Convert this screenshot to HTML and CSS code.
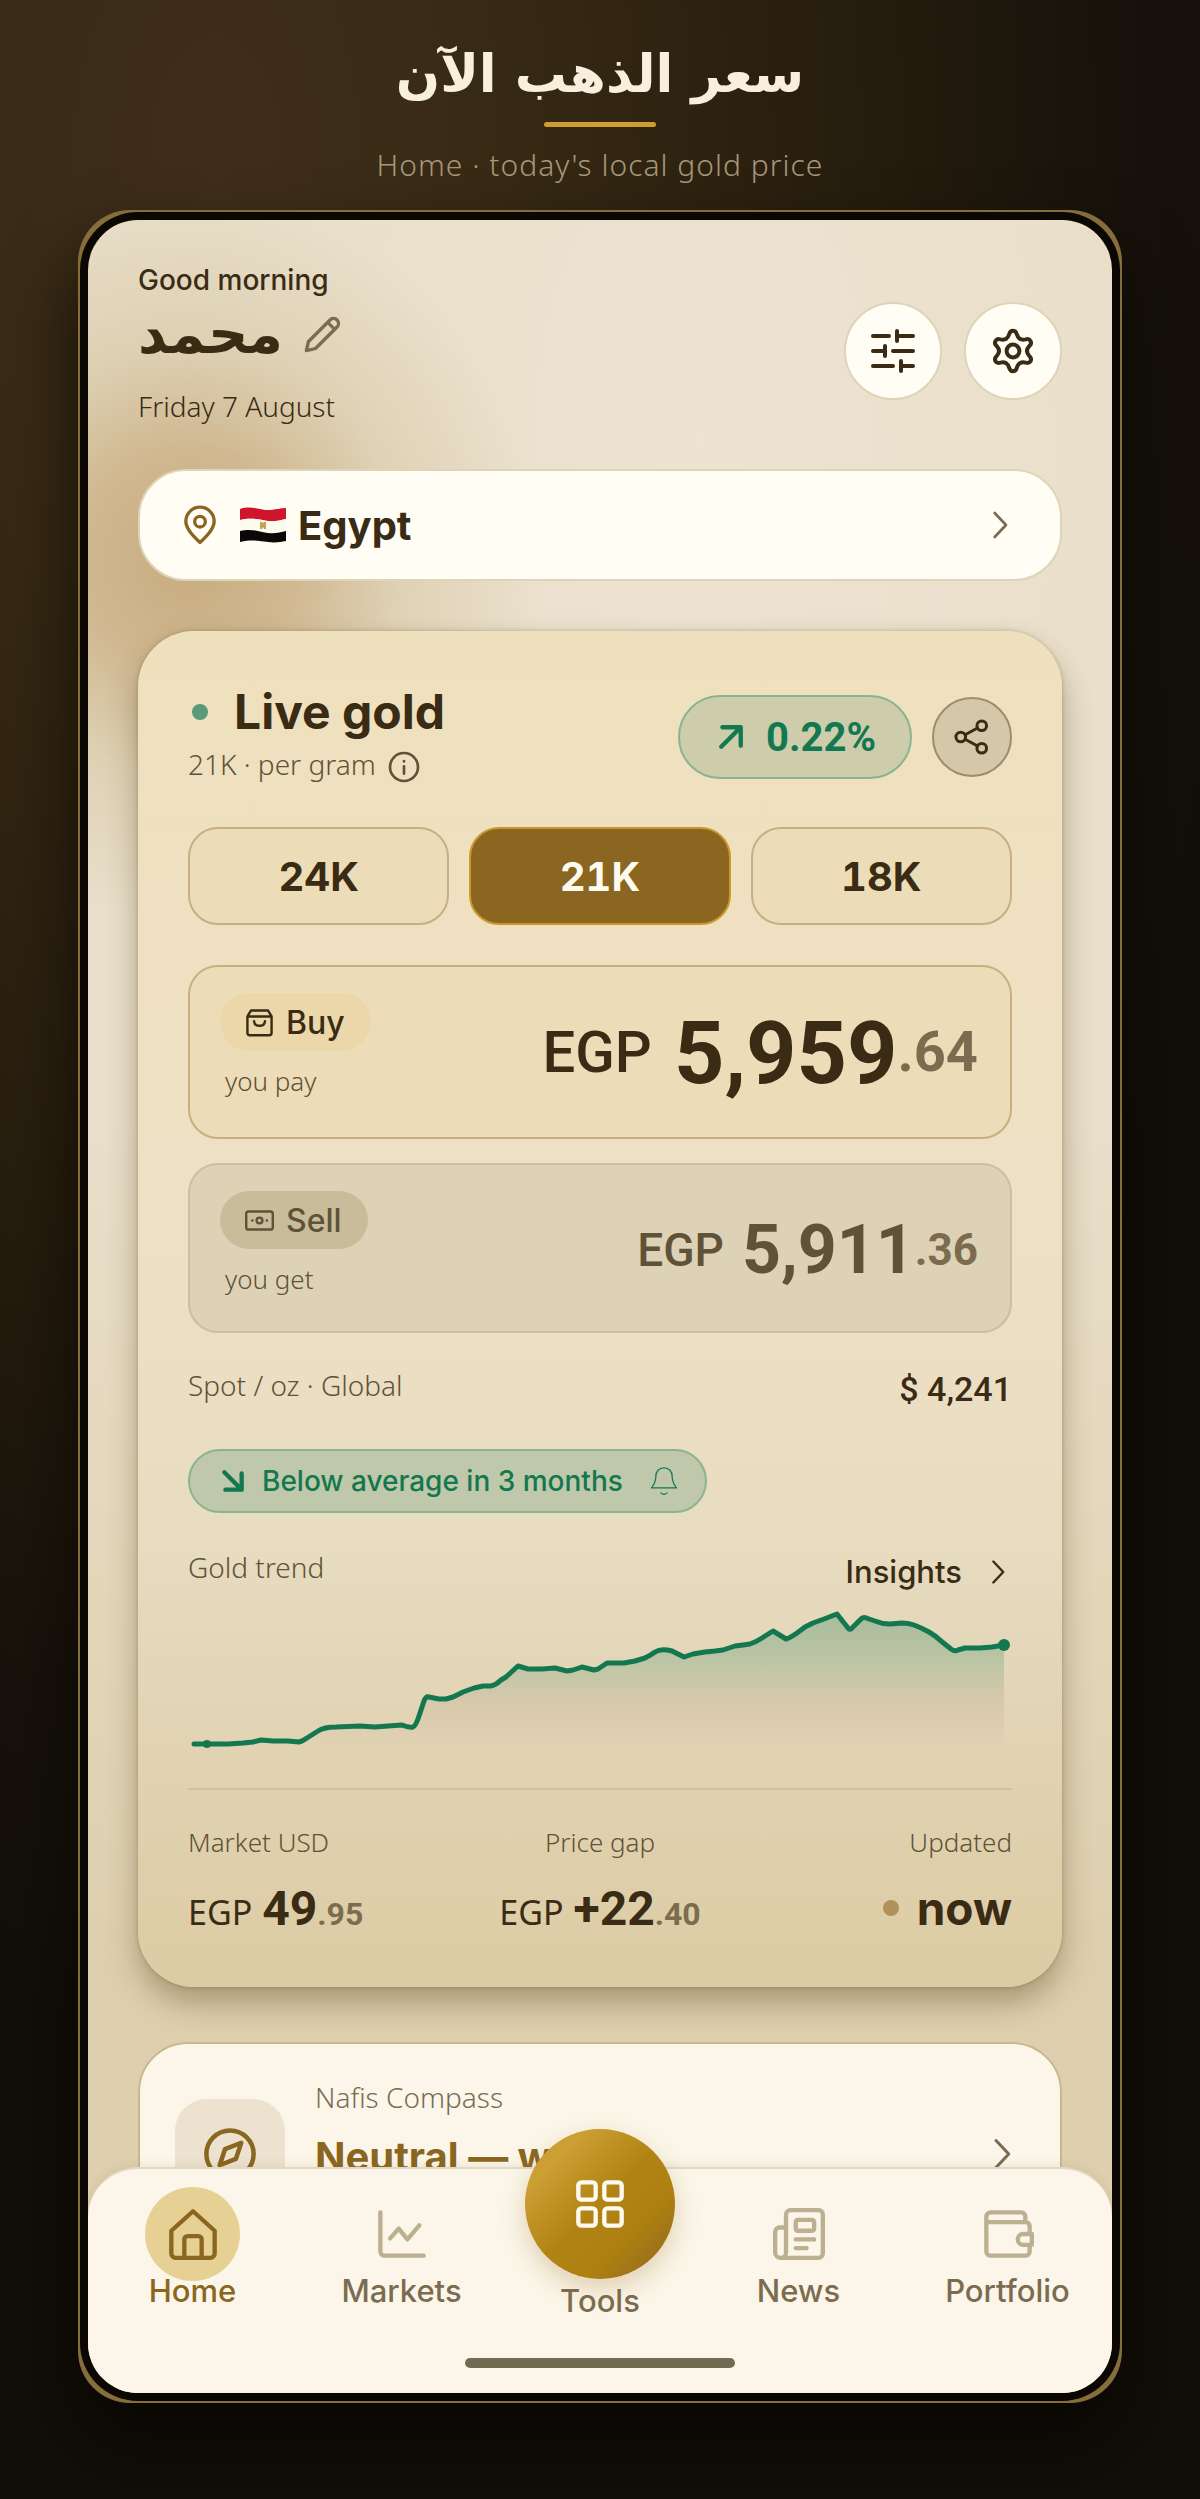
FILE: index.html
```html
<!DOCTYPE html>
<html lang="en">
<head>
  <meta charset="UTF-8">
  <meta name="viewport" content="width=device-width, initial-scale=1.0">
  <title>Live gold price</title>
  <link rel="stylesheet" href="styles.css">
</head>
<body>
  <header class="hero">
    <h1 lang="ar" dir="rtl">سعر الذهب الآن</h1>
    <span class="hero-line"></span>
    <p>Home · today's local gold price</p>
  </header>

  <div class="phone">
    <div class="bezel">
      <main class="screen">
        <div class="topbar">
          <div class="greeting">
            <p class="hello">Good morning</p>
            <div class="name-row">
              <h2 lang="ar">محمد</h2>
              <button class="icon-btn edit" aria-label="Edit name">
                <svg class="icon" viewBox="0 0 24 24"><path d="M2 22l1.300-5.500L16.500 3.300a3 3 0 0 1 4.200 4.200L7.500 20.700zM14.800 5l4.200 4.200"/></svg>
              </button>
            </div>
            <p class="date">Friday 7 August</p>
          </div>
          <div class="actions">
            <button class="round-btn" aria-label="Filters">
              <svg class="icon" viewBox="0 0 24 24"><path d="M2 4.500h8M14 4.500h8M14 2v5M2 12h6M8 9.500v5M12 12h10M2 19.500h10M16 19.500h6M16 17v5"/></svg>
            </button>
            <button class="round-btn" aria-label="Settings">
              <svg class="icon" viewBox="0 0 24 24">
                <defs><path id="tooth" d="M8.500 5.940C9.600 5.300 9.800 4.600 10.100 3.600C10.700 1.300 13.300 1.300 13.900 3.600C14.200 4.600 14.400 5.300 15.500 5.940"/></defs>
                <use href="#tooth"/>
                <use href="#tooth" transform="rotate(60 12 12)"/>
                <use href="#tooth" transform="rotate(120 12 12)"/>
                <use href="#tooth" transform="rotate(180 12 12)"/>
                <use href="#tooth" transform="rotate(240 12 12)"/>
                <use href="#tooth" transform="rotate(300 12 12)"/>
                <circle cx="12" cy="12" r="3.200"/>
              </svg>
            </button>
          </div>
        </div>

        <button class="country">
          <svg class="icon pin" viewBox="0 0 24 24"><path d="M12 22.500C7.500 18.500 3.500 14 3.500 9.800a8.500 8.500 0 0 1 17 0c0 4.200-4 8.700-8.500 12.700z"/><circle cx="12" cy="10" r="3.200"/></svg>
          <svg class="flag" viewBox="0 0 46 36">
            <path fill="#cf142b" d="M0 2C12-2 22 4 30 3s12-2 16-2v11c-6 1-10 3-18 2S12 10 0 13z"/>
            <path fill="#fdfaf0" d="M0 13c12-3 20 0 28 1s12-1 18-2v12c-6 1-10 3-18 2S12 21 0 24z"/>
            <path fill="#0a0806" d="M0 24c12-3 20 1 28 2s12-1 18-2v10c-6 1-10 2-18 1S12 32 0 35z"/>
            <path fill="#c9a050" d="M20 15h2l1 1 1-1h2v7h-2l-1-2-1 2h-2z"/>
          </svg>
          <span>Egypt</span>
          <svg class="icon chevron" viewBox="0 0 24 24"><path d="M8 3l8.500 9L8 21"/></svg>
        </button>

        <section class="gold-card">
          <div class="card-head">
            <div>
              <h3><i class="dot live"></i>Live gold</h3>
              <p class="per-gram">21K · per gram
                <svg class="icon info" viewBox="0 0 24 24"><circle cx="12" cy="12" r="10.500"/><path d="M12 11.500V17M12 7.600v.2"/></svg>
              </p>
            </div>
            <div class="head-actions">
              <span class="change">
                <svg class="icon" viewBox="0 0 24 24"><path d="M3 21L21 3M4 3h17v17"/></svg>0.22%
              </span>
              <button class="share" aria-label="Share">
                <svg class="icon" viewBox="0 0 24 24"><circle cx="4.500" cy="12" r="3.200"/><circle cx="18.500" cy="4.500" r="3.200"/><circle cx="18.500" cy="19.500" r="3.200"/><path d="M7.400 10.500l8.300-4.500M7.400 13.500l8.300 4.500"/></svg>
              </button>
            </div>
          </div>

          <div class="karats">
            <button>24K</button>
            <button class="active">21K</button>
            <button>18K</button>
          </div>

          <div class="price-box buy">
            <div>
              <span class="tag">
                <svg class="icon" viewBox="0 0 24 24"><path d="M2 7l3-5h14l3 5v13.500a2 2 0 0 1-2 2H4a2 2 0 0 1-2-2zM2 7h20M7.500 11c.5 5 8.500 5 9 0"/></svg>Buy
              </span>
              <p>you pay</p>
            </div>
            <div class="amount"><small>EGP</small><b>5,959</b><em>.64</em></div>
          </div>

          <div class="price-box sell">
            <div>
              <span class="tag">
                <svg class="icon" viewBox="0 0 24 24"><rect x="1" y="4.500" width="22" height="15" rx="2"/><circle cx="12" cy="12" r="2.400"/><path d="M6 12h.2M18 12h.2"/></svg>Sell
              </span>
              <p>you get</p>
            </div>
            <div class="amount"><small>EGP</small><b>5,911</b><em>.36</em></div>
          </div>

          <div class="row spot">
            <span class="label">Spot / oz · Global</span>
            <span class="usd">$ 4,241</span>
          </div>

          <button class="alert">
            <svg class="icon arrow" viewBox="0 0 24 24"><path d="M4 4l16 16M20 5v15H5"/></svg>
            Below average in 3 months
            <svg class="icon bell" viewBox="0 0 24 24"><path d="M12 1.500c-4 0-6.500 3-6.500 6.500 0 5-1.500 7-3.500 9.500h20c-2-2.500-3.500-4.500-3.500-9.500 0-3.500-2.500-6.500-6.500-6.500zM9.500 21.500c1.500 1.500 3.500 1.500 5 0"/></svg>
          </button>

          <div class="row trend">
            <span class="label">Gold trend</span>
            <a href="#">Insights
              <svg class="icon" viewBox="0 0 24 24"><path d="M8 3l8.500 9L8 21"/></svg>
            </a>
          </div>
          <svg class="chart" viewBox="0 0 824 152" role="img" aria-label="Gold trend chart">
            <defs>
              <linearGradient id="area" x1="0" y1="0" x2="0" y2="1">
                <stop offset="0" stop-color="#13784f" stop-opacity=".3"/>
                <stop offset=".4" stop-color="#13784f" stop-opacity=".17"/>
                <stop offset=".65" stop-color="#a08c78" stop-opacity=".18"/>
                <stop offset="1" stop-color="#a08c78" stop-opacity="0"/>
              </linearGradient>
            </defs>
            <path fill="url(#area)" d="M6 144L55 143 73 140 111 142 136 129 148 127 187 127 214 125 225 127 232 117 241 97 251 99 265 97 286 88 303 86 313 81 330 66 340 69 367 68 379 71 394 67 406 70 419 63 436 63 457 58 472 50 484 51 496 57 517 52 535 50 547 46 562 44 574 39 585 31 599 39 625 23 636 19 649 14 662 29 675 17 687 21 702 24 714 23 726 26 741 32 753 40 767 51 777 48 792 48 816 45V148H6z"/>
            <path class="line" d="M6 144L19 144 40 144 55 143 65 142 73 140 85 141 100 141 111 142Q115 141 119 138L130 131Q136 127 148 127L172 126 187 127 200 126 214 125Q221 128 225 127Q228 126 232 113L236 101Q238 96 241 97L251 99 258 99 265 97 275 92 286 88 295 86 303 86Q308 85 313 80L318 77 330 66 340 69 354 69 367 68 379 71 385 70 394 67 406 70 410 69 419 63 427 63 436 63 447 61 457 58Q463 55 467 52Q473 48 484 51L496 57 505 54 517 52 527 51 535 50 547 46 555 45 562 44Q568 42 574 38L585 31 598 39Q602 38 609 33L617 27 625 23 636 19 649 14 660 28Q662 31 665 27L673 19Q675 16 681 19L687 21Q694 24 702 24L714 23Q720 23 726 25Q734 28 741 32Q748 36 753 41L763 49Q767 52 770 50L777 48 792 48 804 47 816 45"/>
            <circle cx="19" cy="144" r="4"/>
            <circle cx="816" cy="45" r="6"/>
          </svg>

          <div class="stats">
            <div>
              <p>Market USD</p>
              <div class="stat"><small>EGP</small><b>49</b><em>.95</em></div>
            </div>
            <div>
              <p>Price gap</p>
              <div class="stat"><small>EGP</small><b>+22</b><em>.40</em></div>
            </div>
            <div>
              <p>Updated</p>
              <div class="stat now"><i class="dot"></i>now</div>
            </div>
          </div>
        </section>

        <a href="#" class="compass">
          <span class="tile">
            <svg class="icon" viewBox="0 0 24 24"><circle cx="12" cy="12" r="10.500"/><path d="M17 7l-2.400 7.200L7.400 17l2.400-7.200z"/></svg>
          </span>
          <span class="compass-text">
            <small>Nafis Compass</small>
            <strong>Neutral — wait</strong>
          </span>
          <svg class="icon chevron" viewBox="0 0 24 24"><path d="M8 3l8.500 9L8 21"/></svg>
        </a>

        <nav class="tabbar">
          <div class="tabs">
            <a href="#" class="tab active">
              <span class="tab-icon"><svg class="icon" viewBox="0 0 24 24"><path d="M2 10.500L12 1.500l10 9V21a2 2 0 0 1-2 2H4a2 2 0 0 1-2-2zM8 23v-8.500a1.500 1.500 0 0 1 1.500-1.500h5a1.500 1.500 0 0 1 1.500 1.500V23"/></svg></span>
              Home
            </a>
            <a href="#" class="tab">
              <span class="tab-icon"><svg class="icon" viewBox="0 0 24 24"><path d="M2 2v18a2 2 0 0 0 2 2h18M6.500 14l4-4.500 4 5L20 8"/></svg></span>
              Markets
            </a>
            <a href="#" class="tab tools">
              <span class="tab-icon"><svg class="icon" viewBox="0 0 24 24"><rect x="2" y="2" width="8" height="8" rx="1.500"/><rect x="14" y="2" width="8" height="8" rx="1.500"/><rect x="2" y="14" width="8" height="8" rx="1.500"/><rect x="14" y="14" width="8" height="8" rx="1.500"/></svg></span>
              Tools
            </a>
            <a href="#" class="tab">
              <span class="tab-icon"><svg class="icon" viewBox="0 0 24 24"><path d="M3.500 23H21a2 2 0 0 0 2-2V3a2 2 0 0 0-2-2H8a2 2 0 0 0-2 2v17.500a2.500 2.500 0 0 1-5 0V11a2 2 0 0 1 2-2h3"/><rect x="10.500" y="5.500" width="8.500" height="5" rx="1"/><path d="M10.500 14.500H19M10.500 18.500h5"/></svg></span>
              News
            </a>
            <a href="#" class="tab">
              <span class="tab-icon"><svg class="icon" viewBox="0 0 24 24"><path d="M20 6.500V4a2 2 0 0 0-2-2H4a2 2 0 0 0-2 2v16a2 2 0 0 0 2 2h16a2 2 0 0 0 2-2v-3M22 12V8.500a2 2 0 0 0-2-2H2M23 12h-4a2.500 2.500 0 0 0 0 5h4z"/></svg></span>
              Portfolio
            </a>
          </div>
          <span class="home-bar"></span>
        </nav>
      </main>
    </div>
  </div>
</body>
</html>
```
FILE: styles.css
```css
* {
  margin: 0;
  padding: 0;
  box-sizing: border-box;
}
body {
  min-height: 100vh;
  display: flex;
  flex-direction: column;
  padding: 0 78px 96px;
  font-family: 'Inter', 'Noto Sans', sans-serif;
  color: #3a2b15;
  background:
    radial-gradient(ellipse 1100px 1900px at 18% 6%, #3f2e1a 0%, #372a14 25%, #271d0e 58%, rgba(24, 19, 11, 0.8) 82%, rgba(18, 14, 9, 0) 100%),
    #120e09;
}
button {
  font: inherit;
  color: inherit;
  border: none;
  background: none;
  cursor: pointer;
}
a {
  color: inherit;
  text-decoration: none;
}
em, i {
  font-style: normal;
}
.icon {
  display: block;
  flex: none;
  fill: none;
  stroke: currentColor;
  stroke-width: 2;
  stroke-linecap: round;
  stroke-linejoin: round;
}
.dot {
  display: block;
  width: 16px;
  height: 16px;
  border-radius: 50%;
  background: #b0915a;
}

/* Page heading */
.hero {
  height: 210px;
  padding-top: 32px;
  display: flex;
  flex-direction: column;
  align-items: center;
}
.hero h1 {
  font-family: 'DejaVu Sans', sans-serif;
  font-size: 52px;
  line-height: 84px;
  font-weight: 700;
  color: #f8efdc;
}
.hero-line {
  width: 112px;
  height: 5px;
  margin-top: 6px;
  border-radius: 3px;
  background: #cf9e2e;
}
.hero p {
  margin-top: 18px;
  font-family: 'Noto Sans', sans-serif;
  font-size: 30px;
  line-height: 40px;
  font-weight: 300;
  letter-spacing: 1px;
  color: #a8977a;
}

/* Device */
.phone {
  flex: 1;
  display: flex;
  padding: 2px;
  border-radius: 52px;
  background: #866d3c;
  box-shadow: 0 40px 70px rgba(8, 6, 3, 0.75);
}
.bezel {
  flex: 1;
  display: flex;
  padding: 8px;
  border-radius: 58px;
  background: #0b0803;
}
.screen {
  flex: 1;
  position: relative;
  overflow: hidden;
  padding: 40px 50px 0;
  border-radius: 50px;
  background:
    radial-gradient(circle 360px at 100px 340px, rgba(183, 145, 88, 0.65) 0%, rgba(183, 145, 88, 0.5) 30%, rgba(196, 178, 130, 0.3) 60%, rgba(220, 205, 160, 0) 100%),
    radial-gradient(ellipse 500px 900px at 60% 10%, #eee3d1, rgba(238, 227, 209, 0)),
    linear-gradient(#e8dec8 0%, #e9dfcb 40%, #e2d6b8 65%, #ddcfae 80%, #e0cfae 100%);
}

/* Greeting */
.topbar {
  display: flex;
  justify-content: space-between;
  align-items: flex-start;
  margin-bottom: 40px;
}
.greeting {
  height: 169px;
}
.hello {
  font-size: 28px;
  line-height: 40px;
  font-weight: 500;
}
.name-row {
  display: flex;
  align-items: center;
  gap: 20px;
}
.name-row h2 {
  font-family: 'DejaVu Sans', sans-serif;
  font-size: 56px;
  line-height: 68px;
  font-weight: 700;
}
.edit {
  color: #7b6c50;
}
.edit .icon {
  width: 40px;
  height: 40px;
}
.date {
  margin-top: 18px;
  font-family: 'Noto Sans', sans-serif;
  font-size: 28px;
  line-height: 40px;
  font-weight: 300;
}
.actions {
  display: flex;
  gap: 22px;
  padding-top: 42px;
}
.round-btn {
  display: flex;
  align-items: center;
  justify-content: center;
  width: 98px;
  height: 98px;
  border: 2px solid #dfd3b8;
  border-radius: 50%;
  background: #fffdf4;
}
.round-btn .icon {
  width: 48px;
  height: 48px;
}

/* Country picker */
.country {
  display: flex;
  align-items: center;
  width: 100%;
  height: 112px;
  padding: 0 44px 0 40px;
  border: 2px solid #dfd3b8;
  border-radius: 48px;
  background: #fffdf4;
  font-size: 40px;
  font-weight: 700;
}
.pin {
  width: 40px;
  height: 40px;
  margin-right: 20px;
  color: #8a6620;
}
.flag {
  width: 46px;
  height: 36px;
  margin-right: 12px;
}
.chevron {
  width: 32px;
  height: 32px;
  margin-left: auto;
  color: #7b6c50;
}

/* Live gold card */
.gold-card {
  margin-top: 50px;
  height: 1356px;
  padding: 57px 50px 0;
  border-radius: 56px;
  background: linear-gradient(#efe0bd 0%, #eee0c5 45%, #e7dbc0 68%, #e0d2b0 85%, #dccca4 100%);
  box-shadow: 0 16px 30px rgba(90, 70, 30, 0.4), 0 0 4px rgba(90, 70, 30, 0.3);
}
.card-head {
  display: flex;
  justify-content: space-between;
}
.card-head h3 {
  display: flex;
  align-items: center;
  gap: 26px;
  padding-left: 4px;
  font-size: 48px;
  line-height: 48px;
  font-weight: 700;
}
.live {
  background: #599b78;
}
.per-gram {
  display: flex;
  align-items: center;
  gap: 12px;
  margin-top: 8px;
}
.per-gram, .label {
  font-family: 'Noto Sans', sans-serif;
  font-size: 28px;
  line-height: 40px;
  font-weight: 300;
  color: #5f5236;
}
.info {
  width: 32px;
  height: 32px;
  margin-top: 6px;
}
.head-actions {
  display: flex;
  align-items: center;
  gap: 20px;
  height: 98px;
}
.change {
  display: flex;
  align-items: center;
  gap: 22px;
  height: 84px;
  padding: 0 34px 0 38px;
  border: 2px solid #8cb391;
  border-radius: 42px;
  background: #cdcdac;
  font-family: 'Roboto', sans-serif;
  font-size: 40px;
  font-weight: 700;
  color: #13784f;
}
.change .icon {
  width: 26px;
  height: 26px;
  stroke-width: 4;
}
.share {
  display: flex;
  align-items: center;
  justify-content: center;
  width: 80px;
  height: 80px;
  border: 2px solid #9d8d6e;
  border-radius: 50%;
  background: #d5c8a9;
}
.share .icon {
  width: 36px;
  height: 36px;
}
.karats {
  display: grid;
  grid-template-columns: repeat(3, 1fr);
  gap: 20px;
  margin-top: 41px;
}
.karats button {
  height: 98px;
  border: 2px solid #c6b083;
  border-radius: 30px;
  background: #ecddb8;
  font-size: 40px;
  font-weight: 700;
  font-variant-numeric: tabular-nums;
}
.karats .active {
  border-color: #c8982b;
  background: #8a6620;
  color: #fffaf0;
}
.price-box {
  display: flex;
  justify-content: space-between;
  border: 2px solid #c6b083;
  border-radius: 30px;
  padding: 26px 32px 0 30px;
}
.buy {
  height: 174px;
  margin-top: 40px;
  background: #ecddb8;
}
.sell {
  height: 170px;
  margin-top: 24px;
  border-color: #cbbf9f;
  background: #ddd2b6;
  color: #5f5236;
}
.tag {
  display: flex;
  align-items: center;
  gap: 12px;
  height: 58px;
  padding: 0 26px 0 25px;
  border-radius: 29px;
  background: #ebd7a9;
  font-size: 32px;
  font-weight: 500;
}
.sell .tag {
  background: #c9bc9a;
}
.tag .icon {
  width: 29px;
  height: 29px;
}
.price-box p {
  margin: 12px 0 0 5px;
  font-family: 'Noto Sans', sans-serif;
  font-size: 26px;
  line-height: 36px;
  font-weight: 300;
  color: #5f5236;
}
.amount {
  display: flex;
  align-items: center;
  height: 118px;
  font-family: 'Roboto', sans-serif;
}
.amount small {
  margin-right: 22px;
  font-size: 58px;
  font-weight: 500;
}
.amount b {
  font-size: 88px;
  font-weight: 700;
}
.amount em {
  font-size: 56px;
  font-weight: 700;
  color: #7b6c50;
}
.sell .amount small {
  font-size: 46px;
  margin-right: 18px;
}
.sell .amount b {
  font-size: 68px;
}
.sell .amount em {
  font-size: 44px;
}
.row {
  display: flex;
  justify-content: space-between;
}
.spot {
  margin-top: 32px;
}
.usd {
  font-family: 'Roboto', sans-serif;
  font-size: 34px;
  line-height: 48px;
  font-weight: 500;
}
.alert {
  display: flex;
  align-items: center;
  height: 64px;
  margin-top: 36px;
  padding: 0 26px 0 30px;
  border: 2px solid #8cb391;
  border-radius: 32px;
  background: #bfc8aa;
  font-size: 28px;
  font-weight: 500;
  color: #13784f;
}
.arrow {
  width: 26px;
  height: 26px;
  margin-right: 16px;
  stroke-width: 4;
}
.bell {
  width: 30px;
  height: 30px;
  margin-left: 26px;
  stroke-width: 1;
}
.trend {
  margin-top: 34px;
}
.trend a {
  display: flex;
  align-items: center;
  gap: 22px;
  font-size: 31px;
  line-height: 50px;
  font-weight: 500;
}
.trend .icon {
  width: 28px;
  height: 28px;
}
.chart {
  display: block;
  width: 100%;
  margin-top: 3px;
  fill: #13784f;
}
.chart .line {
  fill: none;
  stroke: #13784f;
  stroke-width: 5;
  stroke-linecap: round;
  stroke-linejoin: round;
}
.stats {
  display: grid;
  grid-template-columns: repeat(3, 1fr);
  margin-top: 36px;
  padding-top: 34px;
  border-top: 2px solid #cfc19d;
}
.stats > div {
  display: flex;
  flex-direction: column;
}
.stats > div:nth-child(2) {
  align-items: center;
}
.stats > div:nth-child(3) {
  align-items: flex-end;
}
.stats p {
  font-family: 'Noto Sans', sans-serif;
  font-size: 26px;
  line-height: 36px;
  font-weight: 300;
  color: #5f5236;
}
.stat {
  display: flex;
  align-items: baseline;
  height: 56px;
  margin-top: 20px;
  font-family: 'Roboto', sans-serif;
}
.stat small {
  margin-right: 10px;
  font-family: 'Noto Sans', sans-serif;
  font-size: 34px;
  font-weight: 400;
}
.stat b {
  font-size: 48px;
}
.stat em {
  font-size: 32px;
  font-weight: 700;
  color: #7b6c50;
}
.now {
  align-items: center;
  gap: 18px;
  font-family: 'Inter', sans-serif;
  font-size: 46px;
  font-weight: 700;
}

/* Compass */
.compass {
  display: flex;
  align-items: center;
  height: 224px;
  margin-top: 55px;
  padding: 0 40px 0 35px;
  border: 2px solid #cbb78e;
  border-radius: 50px;
  background: #fbf6e9;
}
.tile {
  display: flex;
  align-items: center;
  justify-content: center;
  width: 110px;
  height: 110px;
  border-radius: 32px;
  background: #ece2cf;
  color: #8a6620;
}
.tile .icon {
  width: 54px;
  height: 54px;
}
.compass-text {
  display: flex;
  flex-direction: column;
  height: 154px;
  margin-left: 30px;
}
.compass-text small {
  font-family: 'Noto Sans', sans-serif;
  font-size: 28px;
  line-height: 40px;
  font-weight: 300;
  color: #7b6c50;
}
.compass-text strong {
  margin-top: 16px;
  font-size: 40px;
  line-height: 48px;
  font-weight: 700;
  color: #8a6620;
}
.compass .chevron {
  width: 36px;
  height: 36px;
}

/* Bottom navigation, floats over the page content */
.tabbar {
  position: absolute;
  left: 0;
  right: 0;
  bottom: 0;
  height: 226px;
  padding-top: 18px;
  border-top: 2px solid #e3d9c3;
  border-radius: 50px 50px 0 0;
  background: #fbf6e9;
  box-shadow: 0 -2px 10px rgba(120, 95, 50, 0.1);
}
.tabs {
  display: grid;
  grid-template-columns: 1fr 1fr 188px 1fr 1fr;
}
.tab {
  display: flex;
  flex-direction: column;
  align-items: center;
  font-size: 31px;
  line-height: 28px;
  font-weight: 500;
  color: #7b6c50;
}
.tab-icon {
  display: flex;
  align-items: center;
  justify-content: center;
  width: 95px;
  height: 94px;
  margin-bottom: -4px;
  color: #bcb091;
}
.tab .icon {
  width: 52px;
  height: 52px;
}
.tab.active {
  color: #8a6620;
}
.active .tab-icon {
  border-radius: 50%;
  background: #e7d093;
  color: #8a6620;
}
.tools {
  margin-top: -58px;
}
.tools .tab-icon {
  width: 150px;
  height: 150px;
  margin-bottom: 8px;
  border-radius: 50%;
  background: linear-gradient(135deg, #cc9f33 20%, #b08314 50%, #ae8012 70%, #8a6620 100%);
  box-shadow: 0 10px 24px rgba(170, 120, 50, 0.3);
  color: #fffaf0;
}
.home-bar {
  display: block;
  width: 270px;
  height: 10px;
  margin: 43px auto 0;
  border-radius: 5px;
  background: #736a52;
}
```
